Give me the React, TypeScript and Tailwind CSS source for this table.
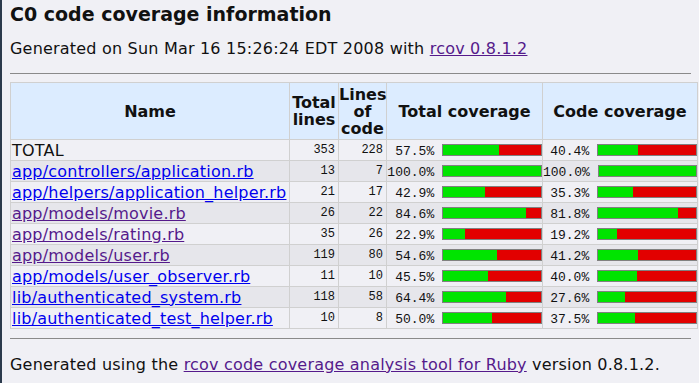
const rows = [
  { name: "TOTAL", total: 353, code: 228, tc: "57.5", cc: "40.4", link: "" },
  { name: "app/controllers/application.rb", total: 13, code: 7, tc: "100.0", cc: "100.0", link: "new" },
  { name: "app/helpers/application_helper.rb", total: 21, code: 17, tc: "42.9", cc: "35.3", link: "new" },
  { name: "app/models/movie.rb", total: 26, code: 22, tc: "84.6", cc: "81.8", link: "visited" },
  { name: "app/models/rating.rb", total: 35, code: 26, tc: "22.9", cc: "19.2", link: "visited" },
  { name: "app/models/user.rb", total: 119, code: 80, tc: "54.6", cc: "41.2", link: "visited" },
  { name: "app/models/user_observer.rb", total: 11, code: 10, tc: "45.5", cc: "40.0", link: "new" },
  { name: "lib/authenticated_system.rb", total: 118, code: 58, tc: "64.4", cc: "27.6", link: "new" },
  { name: "lib/authenticated_test_helper.rb", total: 10, code: 8, tc: "50.0", cc: "37.5", link: "new" },
];

function Coverage({ pct }: { pct: string }) {
  return (
    <div className="flex items-center justify-end">
      <span className="font-['Liberation_Mono',monospace] text-[13px] leading-[15px] mt-[3px] whitespace-pre">
        {pct}%{" "}
      </span>
      <div className="flex w-[100px] h-[12px] border border-[#808080] bg-[#e20000]">
        <div className="h-full bg-[#00e400]" style={{ width: `${parseFloat(pct)}%` }} />
      </div>
    </div>
  );
}

export default function App() {
  return (
    <div className="min-h-screen w-[699px] overflow-hidden bg-[#f0f0f5] border-l-2 border-[#2b3a4c] text-[#111] font-['DejaVu_Sans',Verdana,sans-serif]">
      <div className="pl-[8px] pr-[8px]">
        <h1 className="text-[19px] leading-[24px] font-bold pt-[2px]">C0 code coverage information</h1>
        <p className="text-[16px] leading-[20px] mt-[13px] tracking-[0.2px]">
          Generated on Sun Mar 16 15:26:24 EDT 2008 with{" "}
          <a className="text-[#551a8b] underline">rcov 0.8.1.2</a>
        </p>
        <hr className="border-t border-[#8a8a8a] mt-[14px] mb-[8px]" />
        <table className="border-collapse table-fixed w-[687px] text-[16px]">
          <colgroup>
            <col className="w-[279px]" />
            <col className="w-[49px]" />
            <col className="w-[48px]" />
            <col className="w-[156px]" />
            <col className="w-[155px]" />
          </colgroup>
          <thead>
            <tr className="bg-[#dcecff] font-bold text-center leading-[17px]">
              <td className="border border-[#d0d0d0] h-[57px]">Name</td>
              <td className="border border-[#d0d0d0]">Total lines</td>
              <td className="border border-[#d0d0d0]">Lines of code</td>
              <td className="border border-[#d0d0d0]">Total coverage</td>
              <td className="border border-[#d0d0d0]">Code coverage</td>
            </tr>
          </thead>
          <tbody>
            {rows.map((r, i) => (
              <tr key={r.name} className={i % 2 === 0 ? "bg-[#f0f0f5]" : "bg-[#e6e6eb]"}>
                <td className="border border-[#d0d0d0] h-[21px] leading-[19px] whitespace-nowrap pl-[1px] tracking-[0.2px]">
                  {r.link === "" ? (
                    r.name
                  ) : (
                    <a className={`underline ${r.link === "visited" ? "text-[#551a8b]" : "text-[#0000ee]"}`}>{r.name}</a>
                  )}
                </td>
                <td className="border border-[#d0d0d0] text-right pr-[3px] font-['Liberation_Mono',monospace] text-[12px]">
                  {r.total}
                </td>
                <td className="border border-[#d0d0d0] text-right pr-[3px] font-['Liberation_Mono',monospace] text-[12px]">
                  {r.code}
                </td>
                <td className="border border-[#d0d0d0] p-0">
                  <Coverage pct={r.tc} />
                </td>
                <td className="border border-[#d0d0d0] p-0">
                  <Coverage pct={r.cc} />
                </td>
              </tr>
            ))}
          </tbody>
        </table>
        <hr className="border-t border-[#8a8a8a] mt-[9px]" />
        <p className="text-[16px] leading-[20px] mt-[16px] tracking-[0.2px]">
          Generated using the{" "}
          <a className="text-[#551a8b] underline">rcov code coverage analysis tool for Ruby</a> version 0.8.1.2.
        </p>
      </div>
    </div>
  );
}
